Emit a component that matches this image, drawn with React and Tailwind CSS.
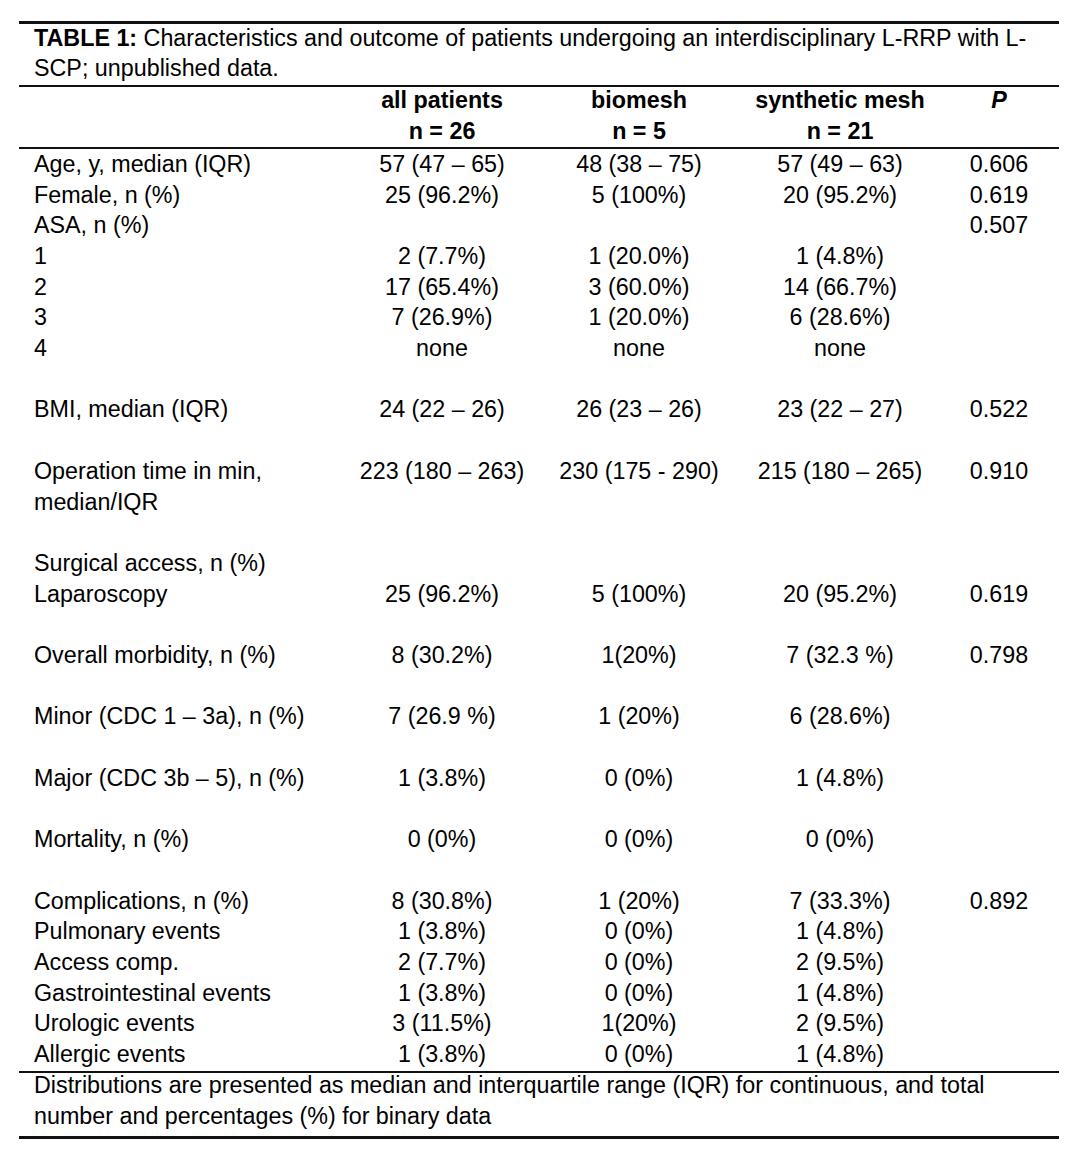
import React from "react";

const rows = [
  [["Age, y, median (IQR)"], "57 (47 – 65)", "48 (38 – 75)", "57 (49 – 63)", "0.606"],
  [["Female, n (%)"], "25 (96.2%)", "5 (100%)", "20 (95.2%)", "0.619"],
  [["ASA, n (%)"], "", "", "", "0.507"],
  [["1"], "2 (7.7%)", "1 (20.0%)", "1 (4.8%)", ""],
  [["2"], "17 (65.4%)", "3 (60.0%)", "14 (66.7%)", ""],
  [["3"], "7 (26.9%)", "1 (20.0%)", "6 (28.6%)", ""],
  [["4"], "none", "none", "none", ""],
  null,
  [["BMI, median (IQR)"], "24 (22 – 26)", "26 (23 – 26)", "23 (22 – 27)", "0.522"],
  null,
  [["Operation time in min,", "median/IQR"], "223 (180 – 263)", "230 (175 - 290)", "215 (180 – 265)", "0.910"],
  null,
  [["Surgical access, n (%)"], "", "", "", ""],
  [["Laparoscopy"], "25 (96.2%)", "5 (100%)", "20 (95.2%)", "0.619"],
  null,
  [["Overall morbidity, n (%)"], "8 (30.2%)", "1(20%)", "7 (32.3 %)", "0.798"],
  null,
  [["Minor (CDC 1 – 3a), n (%)"], "7 (26.9 %)", "1 (20%)", "6 (28.6%)", ""],
  null,
  [["Major (CDC 3b – 5), n (%)"], "1 (3.8%)", "0 (0%)", "1 (4.8%)", ""],
  null,
  [["Mortality, n (%)"], "0 (0%)", "0 (0%)", "0 (0%)", ""],
  null,
  [["Complications, n (%)"], "8 (30.8%)", "1 (20%)", "7 (33.3%)", "0.892"],
  [["Pulmonary events"], "1 (3.8%)", "0 (0%)", "1 (4.8%)", ""],
  [["Access comp."], "2 (7.7%)", "0 (0%)", "2 (9.5%)", ""],
  [["Gastrointestinal events"], "1 (3.8%)", "0 (0%)", "1 (4.8%)", ""],
  [["Urologic events"], "3 (11.5%)", "1(20%)", "2 (9.5%)", ""],
  [["Allergic events"], "1 (3.8%)", "0 (0%)", "1 (4.8%)", ""],
];

const gridCls = "grid grid-cols-[323px_200px_194px_208px_110px]";

export default function App() {
  return (
    <div className="min-h-[1161px] bg-white pt-[21px] font-['Liberation_Sans',Arial,sans-serif] text-[23.3px] leading-[30.7px] text-black">
      <div className="ml-[19px] w-[1040px]">
        <div className="h-[3px] bg-[#111]" />
        <div className="-mt-[1.5px] mb-[1.5px] pl-[15px] whitespace-nowrap">
          <span className="font-bold">TABLE 1:</span> Characteristics and outcome of patients undergoing an interdisciplinary L-RRP with L-
          <br />
          SCP; unpublished data.
        </div>
        <div className="h-[2px] bg-[#111]" />
        <div className={gridCls + " -mt-[2px] font-bold"}>
          <div />
          <div className="text-center">
            all patients
            <br />n = 26
          </div>
          <div className="text-center">
            biomesh
            <br />n = 5
          </div>
          <div className="text-center">
            synthetic mesh
            <br />n = 21
          </div>
          <div className="text-center italic">P</div>
        </div>
        <div className="h-[2px] bg-[#111]" />
        <div className="mb-[1.5px]">
          {rows.map((r, i) =>
            r === null ? (
              <div key={i} className="h-[30.7px]" />
            ) : (
              <div key={i} className={gridCls}>
                <div className="pl-[15px] whitespace-nowrap">
                  {r[0].map((l, j) => (
                    <div key={j}>{l}</div>
                  ))}
                </div>
                <div className="text-center whitespace-nowrap">{r[1]}</div>
                <div className="text-center whitespace-nowrap">{r[2]}</div>
                <div className="text-center whitespace-nowrap">{r[3]}</div>
                <div className="text-center whitespace-nowrap">{r[4]}</div>
              </div>
            )
          )}
        </div>
        <div className="h-[2px] bg-[#111]" />
        <div className="-mt-[3px] pl-[15px] whitespace-nowrap">
          Distributions are presented as median and interquartile range (IQR) for continuous, and total
          <br />
          number and percentages (%) for binary data
        </div>
        <div className="mt-[4px] h-[3px] bg-[#111]" />
      </div>
    </div>
  );
}
